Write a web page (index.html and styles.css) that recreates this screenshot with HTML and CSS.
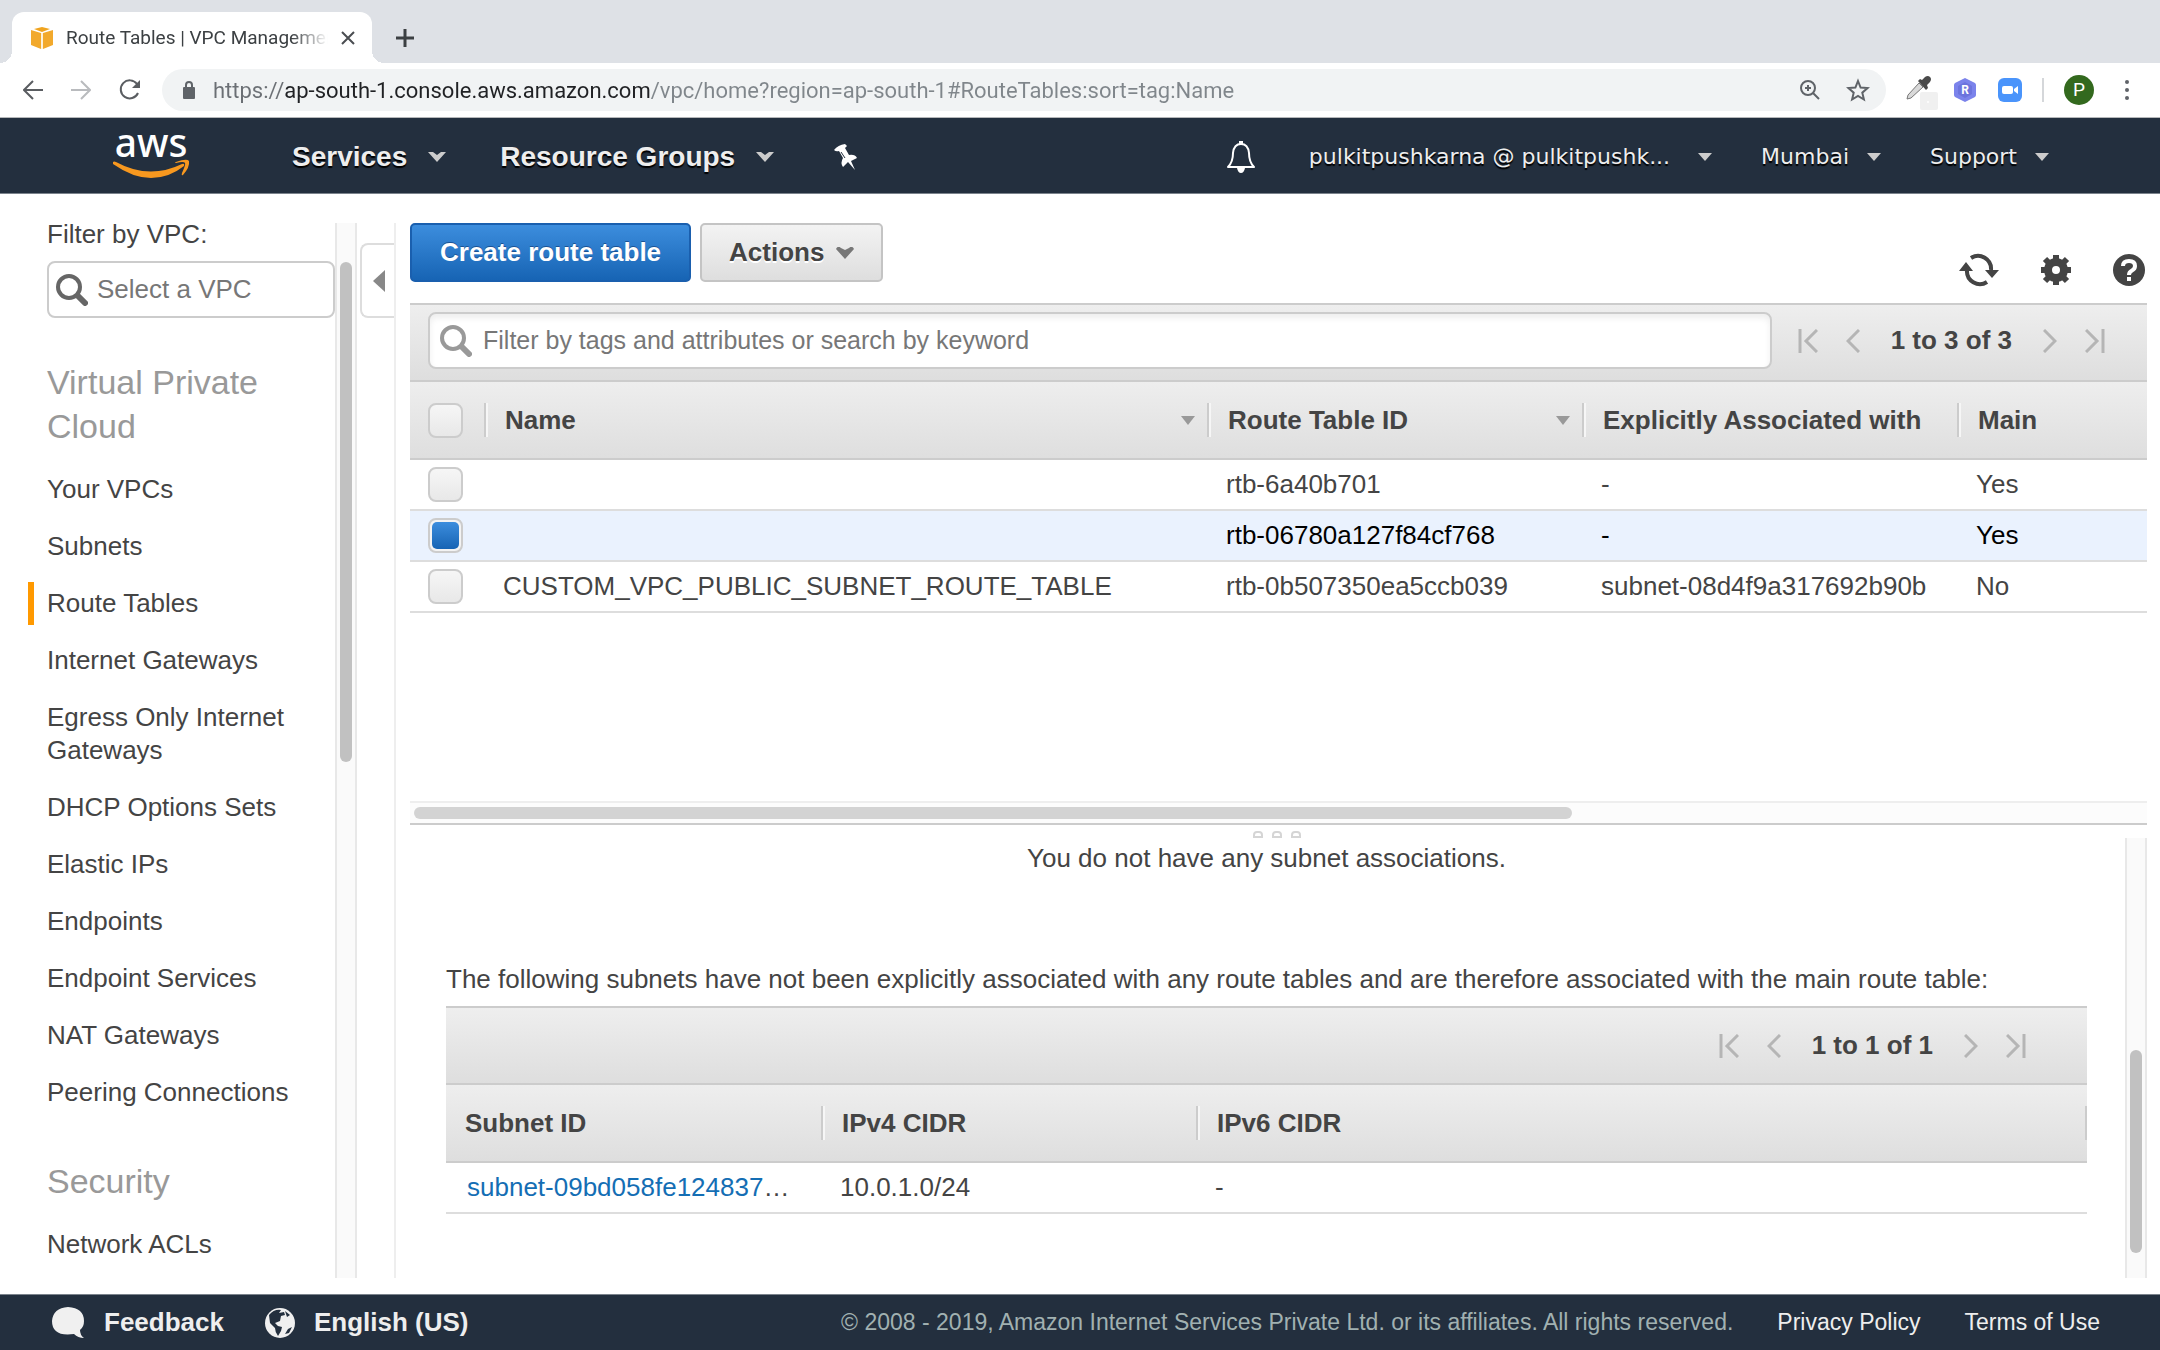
FILE: index.html
```
<!DOCTYPE html>
<html lang="en">
<head>
    <meta charset="UTF-8">
    <meta name="viewport" content="width=device-width, initial-scale=1.0">
    <title>Route Tables | VPC Management Console</title>
    <link rel="stylesheet" href="styles.css">
</head>
<body>
    <!-- Browser tabs -->
    <div class="tab-strip">
        <div class="tab">
            <svg class="tab-icon" viewBox="0 0 22 22" width="22" height="22">
                <path fill="#f2a92c" d="M0 3l10 3v16L0 18z"/>
                <path fill="#f2a92c" d="M22 3l-10 3v16l10-4z"/>
                <path fill="#f0a41f" d="M11 0l8 2-8 3-8-3z"/>
                <path stroke="#fbe3b5" stroke-width="1" d="M11 6v16"/>
            </svg>
            <span class="tab-title">Route Tables | VPC Management</span>
            <button class="plain" aria-label="Close tab">
                <svg viewBox="0 0 14 14" width="14" height="14" fill="none" stroke="#4a4d51" stroke-width="2"><path d="M1 1l12 12M13 1L1 13"/></svg>
            </button>
        </div>
        <button class="plain" aria-label="New tab">
            <svg viewBox="0 0 18 18" width="18" height="18" fill="none" stroke="#3c4043" stroke-width="3"><path d="M9 0v18M0 9h18"/></svg>
        </button>
    </div>

    <!-- Address bar -->
    <div class="toolbar">
        <div class="toolbar-nav">
            <button class="plain" aria-label="Back"><svg viewBox="0 0 20 20" width="20" height="20" fill="none" stroke="#5a5d61" stroke-width="2"><path d="M20 10H1M10 1l-9 9 9 9"/></svg></button>
            <button class="plain" aria-label="Forward"><svg viewBox="0 0 20 20" width="20" height="20" fill="none" stroke="#b9bbbe" stroke-width="2"><path d="M0 10h19M10 1l9 9-9 9"/></svg></button>
            <button class="plain" aria-label="Reload"><svg viewBox="0 0 22 22" width="22" height="22"><path fill="none" stroke="#5a5d61" stroke-width="2" d="M18 5a9 9 0 1 0 1 9"/><path fill="#5a5d61" d="M21 1v8h-8z"/></svg></button>
        </div>
        <div class="address">
            <svg viewBox="0 0 12 18" width="12" height="18"><rect y="6" width="12" height="12" rx="1" fill="#5f6368"/><path fill="none" stroke="#5f6368" stroke-width="2" d="M3 7V4a3 3 0 0 1 6 0v3"/></svg>
            <input class="url" type="text" aria-label="Address" value="https://ap-south-1.console.aws.amazon.com/vpc/home?region=ap-south-1#RouteTables:sort=tag:Name">
            <button class="plain" aria-label="Zoom"><svg viewBox="0 0 20 20" width="20" height="20" fill="none" stroke="#5f6368" stroke-width="2"><circle cx="8" cy="8" r="7"/><path d="M13 13l6 6M8 5v6M5 8h6"/></svg></button>
            <button class="plain" aria-label="Bookmark"><svg viewBox="0 0 24 24" width="24" height="24" fill="none" stroke="#5f6368" stroke-width="2"><path d="M12 3l2.600 6.500 7 .600-5.300 4.600 1.600 6.800L12 17.900l-5.900 3.600 1.600-6.800-5.300-4.600 7-.6z"/></svg></button>
        </div>
        <div class="extensions">
            <button class="plain picker" aria-label="Colour picker">
                <svg viewBox="0 0 32 34" width="32" height="34">
                    <rect x="14" y="16" width="18" height="18" rx="2" fill="#f0f0f0"/>
                    <circle cx="22" cy="26" r="1" fill="#fff"/>
                    <path fill="#d9d9d9" stroke="#777" d="M13 7l4 4L5 22l-4 1 1-4z"/>
                    <path fill="#4a4a4a" d="M12 5l2-2 2 1 3-3q3-2 5 0t0 5l-3 3 1 3-2 2z"/>
                </svg>
            </button>
            <button class="plain" aria-label="R extension">
                <svg viewBox="0 0 22 24" width="22" height="24"><path fill="#7b83eb" d="M11 0l10 5q1 1 1 2v10q0 1-1 2l-10 5-10-5q-1-1-1-2V7q0-1 1-2z"/><path fill="#6c74dd" d="M11 4l7 4v8l-7 4-7-4V8z"/><text x="11" y="16" text-anchor="middle" font-family="Roboto, sans-serif" font-weight="700" font-size="12" fill="#fff">R</text></svg>
            </button>
            <button class="plain" aria-label="Video meeting">
                <svg viewBox="0 0 24 24" width="24" height="24"><rect width="24" height="24" rx="6" fill="#4a94fb"/><rect x="4" y="8" width="11" height="8" rx="2" fill="#fff"/><path fill="#fff" d="M16 11l4-3v8l-4-3z"/></svg>
            </button>
            <span class="divider"></span>
            <button class="avatar">P</button>
            <button class="plain" aria-label="Menu"><svg viewBox="0 0 6 20" width="6" height="20" fill="#5f6368"><circle cx="3" cy="2" r="2"/><circle cx="3" cy="10" r="2"/><circle cx="3" cy="18" r="2"/></svg></button>
        </div>
    </div>

    <!-- AWS navigation -->
    <header class="nav">
        <a class="logo" href="#" aria-label="AWS home">
            <svg viewBox="0 0 78 50" width="78" height="50">
                <text x="39" y="27" text-anchor="middle" font-family="'Noto Sans', sans-serif" font-weight="500" font-size="39" fill="#fff">aws</text>
                <path fill="#f7981f" d="M1 32Q2 31 4 32q33 18 66 2 3-1 2 2-15 12-33 12T1 34z"/>
                <path fill="#f7981f" d="M64 32q11-4 13-1 1 6-6 14-2 1-1-2 4-9 3-10-1-2-9 0-2 0 0-1z"/>
            </svg>
        </a>
        <a class="menu" href="#">Services <svg viewBox="0 0 18 10" width="18" height="10"><path fill="#ccc" d="M0 0h5l4 3 4-3h5L9 10z"/></svg></a>
        <a class="menu" href="#">Resource Groups <svg viewBox="0 0 18 10" width="18" height="10"><path fill="#ccc" d="M0 0h5l4 3 4-3h5L9 10z"/></svg></a>
        <a class="pin" href="#" aria-label="Pin shortcuts">
            <svg viewBox="0 0 24 26" width="24" height="26"><path fill="#fff" d="M0 6Q4 1 11 0l2 2-2 2 4 7q6-1 8 3l-6 3 4 9-7-8-5 5q-3-4 0-9L5 7Q2 8 0 6z"/><path stroke="#232f3e" d="M7 8l4 6"/></svg>
        </a>
        <div class="nav-right">
            <a href="#" class="bell" aria-label="Notifications">
                <svg viewBox="0 0 30 32" width="30" height="32"><path fill="none" stroke="#fff" stroke-width="2" stroke-linejoin="round" d="M15 3q7 0 8 9 0 9 5 14H2q5-5 5-14 1-9 8-9z"/><path fill="#fff" d="M13 0h4v4h-4zM11 27h8q-1 5-4 5t-4-5z"/></svg>
            </a>
            <a href="#" class="menu-small user">pulkitpushkarna @ pulkitpushk... <svg viewBox="0 0 14 8" width="14" height="8"><path fill="#ccc" d="M0 0h14L7 8z"/></svg></a>
            <a href="#" class="menu-small">Mumbai <svg viewBox="0 0 14 8" width="14" height="8"><path fill="#ccc" d="M0 0h14L7 8z"/></svg></a>
            <a href="#" class="menu-small">Support <svg viewBox="0 0 14 8" width="14" height="8"><path fill="#ccc" d="M0 0h14L7 8z"/></svg></a>
        </div>
    </header>

    <div class="console">
        <!-- Sidebar -->
        <aside class="sidebar">
            <nav class="side-nav">
                <label for="vpc">Filter by VPC:</label>
                <div class="field vpc-field">
                    <svg viewBox="0 0 32 32" width="32" height="32" fill="none" stroke="#666"><circle cx="13" cy="13" r="11" stroke-width="4"/><path stroke-width="6" stroke-linecap="round" d="M22 22l7 7"/></svg>
                    <input id="vpc" type="text" placeholder="Select a VPC">
                </div>
                <h2>Virtual Private Cloud</h2>
                <ul>
                    <li><a href="#">Your VPCs</a></li>
                    <li><a href="#">Subnets</a></li>
                    <li class="active"><a href="#">Route Tables</a></li>
                    <li><a href="#">Internet Gateways</a></li>
                    <li><a href="#">Egress Only Internet Gateways</a></li>
                    <li><a href="#">DHCP Options Sets</a></li>
                    <li><a href="#">Elastic IPs</a></li>
                    <li><a href="#">Endpoints</a></li>
                    <li><a href="#">Endpoint Services</a></li>
                    <li><a href="#">NAT Gateways</a></li>
                    <li><a href="#">Peering Connections</a></li>
                </ul>
                <h2>Security</h2>
                <ul>
                    <li><a href="#">Network ACLs</a></li>
                </ul>
            </nav>
            <div class="track track-side"><div class="thumb"></div></div>
            <div class="gutter">
                <button class="collapse" aria-label="Collapse sidebar"><svg viewBox="0 0 12 22" width="12" height="22"><path fill="#888" d="M12 0v22L0 11z"/></svg></button>
            </div>
        </aside>

        <main class="content">
            <div class="actions">
                <button class="btn btn-primary">Create route table</button>
                <button class="btn">Actions <svg viewBox="0 0 18 12" width="18" height="12"><path fill="#777" d="M0 2q2-4 5-1l4 2 4-2q3-3 5 1l-9 10z"/></svg></button>
                <div class="tools">
                    <button class="plain" aria-label="Refresh">
                        <svg viewBox="0 0 40 34" width="40" height="34"><path fill="none" stroke="#444" stroke-width="4" d="M12 5a13 13 0 0 1 20 12M28 29A13 13 0 0 1 8 17"/><path fill="#444" d="M26 17h14l-7 8zM0 18h14L7 9z"/></svg>
                    </button>
                    <button class="plain" aria-label="Settings">
                        <svg viewBox="0 0 30 30" width="30" height="30"><circle cx="15" cy="15" r="8" fill="none" stroke="#444" stroke-width="8"/><path stroke="#444" stroke-width="6" d="M15 0v6M15 24v6M0 15h6M24 15h6M4 4l5 5M21 21l5 5M4 26l5-5M21 9l5-5"/></svg>
                    </button>
                    <button class="plain" aria-label="Help">
                        <svg viewBox="0 0 32 32" width="32" height="32"><circle cx="16" cy="16" r="16" fill="#444"/><path fill="none" stroke="#fff" stroke-width="4" d="M10 12q0-5 6-5t6 5q0 3-3 4.500T16 21"/><path fill="#fff" d="M14 23h4v4h-4z"/></svg>
                    </button>
                </div>
            </div>

            <div class="bar">
                <div class="field filter-field">
                    <svg viewBox="0 0 32 32" width="32" height="32" fill="none" stroke="#999"><circle cx="13" cy="13" r="11" stroke-width="4"/><path stroke-width="6" stroke-linecap="round" d="M22 22l7 7"/></svg>
                    <input type="text" aria-label="Filter route tables" placeholder="Filter by tags and attributes or search by keyword">
                </div>
                <div class="pager">
                    <button class="plain" aria-label="First page"><svg viewBox="0 0 20 24" width="20" height="24" fill="none" stroke="#b5b5b5" stroke-width="3"><path d="M2 0v24M19 1L8 12l11 11"/></svg></button>
                    <button class="plain" aria-label="Previous page"><svg viewBox="0 0 14 24" width="14" height="24" fill="none" stroke="#b5b5b5" stroke-width="3"><path d="M13 1L2 12l11 11"/></svg></button>
                    <span>1 to 3 of 3</span>
                    <button class="plain" aria-label="Next page"><svg viewBox="0 0 14 24" width="14" height="24" fill="none" stroke="#b5b5b5" stroke-width="3"><path d="M1 1l11 11L1 23"/></svg></button>
                    <button class="plain" aria-label="Last page"><svg viewBox="0 0 20 24" width="20" height="24" fill="none" stroke="#b5b5b5" stroke-width="3"><path d="M18 0v24M1 1l11 11L1 23"/></svg></button>
                </div>
            </div>

            <div class="upper">
                <table class="grid">
                    <colgroup><col class="col-check"><col><col class="col-id"><col class="col-id"><col class="col-main"></colgroup>
                    <thead>
                        <tr>
                            <th><input type="checkbox" aria-label="Select all"></th>
                            <th><div class="head">Name <svg viewBox="0 0 14 9" width="14" height="9"><path fill="#999" d="M0 0h14L7 9z"/></svg></div></th>
                            <th><div class="head">Route Table ID <svg viewBox="0 0 14 9" width="14" height="9"><path fill="#999" d="M0 0h14L7 9z"/></svg></div></th>
                            <th><div class="head">Explicitly Associated with</div></th>
                            <th><div class="head">Main</div></th>
                        </tr>
                    </thead>
                    <tbody>
                        <tr>
                            <td><input type="checkbox" aria-label="Select rtb-6a40b701"></td>
                            <td></td>
                            <td>rtb-6a40b701</td>
                            <td>-</td>
                            <td>Yes</td>
                        </tr>
                        <tr class="selected">
                            <td><input type="checkbox" aria-label="Select rtb-06780a127f84cf768" checked></td>
                            <td></td>
                            <td>rtb-06780a127f84cf768</td>
                            <td>-</td>
                            <td>Yes</td>
                        </tr>
                        <tr>
                            <td><input type="checkbox" aria-label="Select rtb-0b507350ea5ccb039"></td>
                            <td>CUSTOM_VPC_PUBLIC_SUBNET_ROUTE_TABLE</td>
                            <td>rtb-0b507350ea5ccb039</td>
                            <td>subnet-08d4f9a317692b90b</td>
                            <td>No</td>
                        </tr>
                    </tbody>
                </table>
                <div class="track-wide"><div class="thumb"></div></div>
            </div>

            <div class="splitter"><i></i><i></i><i></i></div>

            <div class="lower">
                <section class="details">
                    <p class="empty">You do not have any subnet associations.</p>
                    <p class="note">The following subnets have not been explicitly associated with any route tables and are therefore associated with the main route table:</p>
                    <div class="bar bar-inner">
                        <div class="pager">
                            <button class="plain" aria-label="First page"><svg viewBox="0 0 20 24" width="20" height="24" fill="none" stroke="#b5b5b5" stroke-width="3"><path d="M2 0v24M19 1L8 12l11 11"/></svg></button>
                            <button class="plain" aria-label="Previous page"><svg viewBox="0 0 14 24" width="14" height="24" fill="none" stroke="#b5b5b5" stroke-width="3"><path d="M13 1L2 12l11 11"/></svg></button>
                            <span>1 to 1 of 1</span>
                            <button class="plain" aria-label="Next page"><svg viewBox="0 0 14 24" width="14" height="24" fill="none" stroke="#b5b5b5" stroke-width="3"><path d="M1 1l11 11L1 23"/></svg></button>
                            <button class="plain" aria-label="Last page"><svg viewBox="0 0 20 24" width="20" height="24" fill="none" stroke="#b5b5b5" stroke-width="3"><path d="M18 0v24M1 1l11 11L1 23"/></svg></button>
                        </div>
                    </div>
                    <table class="grid grid-inner">
                        <colgroup><col class="col-id"><col class="col-id"><col></colgroup>
                        <thead>
                            <tr>
                                <th><div class="head">Subnet ID</div></th>
                                <th><div class="head">IPv4 CIDR</div></th>
                                <th><div class="head">IPv6 CIDR</div></th>
                            </tr>
                        </thead>
                        <tbody>
                            <tr>
                                <td><a href="#">subnet-09bd058fe124837</a>…</td>
                                <td>10.0.1.0/24</td>
                                <td>-</td>
                            </tr>
                        </tbody>
                    </table>
                </section>
                <div class="track track-details"><div class="thumb"></div></div>
            </div>
        </main>
    </div>

    <footer class="footer">
        <a href="#" class="footer-link">
            <svg viewBox="0 0 34 32" width="34" height="32"><path fill="#f0f0f0" d="M16 0q16 1 16 14 0 6-4 9 0 5 4 8-6 0-10-4-22 3-22-13Q1 1 16 0z"/></svg>
            Feedback
        </a>
        <a href="#" class="footer-link">
            <svg viewBox="0 0 32 32" width="32" height="32"><circle cx="16" cy="16" r="15" fill="#f0f0f0"/><path fill="#232f3e" d="M5 8q5-6 12-5l-2 3 5-1 1 3-4 1-1 5-5 2 3 3 4 1-1 4-3 5q-3-4-3-8l-5-5zM21 4l5 4-3 2zM24 22l4-2-3 6-4 1z"/></svg>
            English (US)
        </a>
        <span class="copyright">© 2008 - 2019, Amazon Internet Services Private Ltd. or its affiliates. All rights reserved.</span>
        <a href="#" class="legal">Privacy Policy</a>
        <a href="#" class="legal">Terms of Use</a>
    </footer>
</body>
</html>
```
FILE: styles.css
```
* {
    box-sizing: border-box;
}

body {
    margin: 0;
    min-height: 100vh;
    display: flex;
    flex-direction: column;
    background-color: #fff;
    color: #444;
    font-family: "Liberation Sans", Arial, sans-serif;
    font-size: 26px;
    line-height: 33px;
}

a {
    color: inherit;
    text-decoration: none;
}

input,
button {
    font: inherit;
    color: inherit;
}

svg {
    display: block;
    flex: none;
}

.plain {
    padding: 0;
    border: 0;
    background: none;
    cursor: pointer;
}

/* Browser */
.tab-strip {
    display: flex;
    align-items: center;
    gap: 24px;
    height: 63px;
    padding: 12px 12px 0;
    background-color: #dee1e6;
}

.tab {
    position: relative;
    display: flex;
    align-items: center;
    gap: 13px;
    width: 360px;
    height: 51px;
    padding: 0 17px 0 19px;
    border-radius: 12px 12px 0 0;
    background-color: #fff;
}

.tab::before,
.tab::after {
    content: "";
    position: absolute;
    bottom: 0;
    width: 12px;
    height: 12px;
}

.tab::before {
    right: 100%;
    background: radial-gradient(circle at 0 0, transparent 12px, #fff 12px);
}

.tab::after {
    left: 100%;
    background: radial-gradient(circle at 100% 0, transparent 12px, #fff 12px);
}

.tab-title {
    flex: 1;
    overflow: hidden;
    white-space: nowrap;
    color: #3c4043;
    font-family: Roboto, sans-serif;
    font-size: 19px;
    -webkit-mask-image: linear-gradient(to right, #000 86%, transparent);
    mask-image: linear-gradient(to right, #000 86%, transparent);
}

.toolbar {
    display: flex;
    align-items: center;
    height: 55px;
    padding: 0 30px 0 23px;
    border-bottom: 1px solid #b6b8ba;
}

.toolbar-nav {
    display: flex;
    gap: 28px;
    padding-right: 21px;
}

.address {
    flex: 1;
    display: flex;
    align-items: center;
    gap: 26px;
    height: 42px;
    padding: 0 16px 0 21px;
    border-radius: 21px;
    background-color: #f1f3f4;
}

.url {
    flex: 1;
    min-width: 0;
    margin-left: -8px;
    padding: 0;
    border: 0;
    outline: 0;
    font-family: Roboto, sans-serif;
    font-size: 22px;
    background: linear-gradient(to right, #6b6f74 72px, #202124 72px, #202124 438px, #80868b 438px);
    -webkit-background-clip: text;
    background-clip: text;
    color: transparent;
}

.extensions {
    display: flex;
    align-items: center;
    gap: 22px;
    padding-left: 20px;
}

.picker {
    padding-top: 6px;
    margin-right: -6px;
}

.divider {
    width: 2px;
    height: 24px;
    margin: 0 -2px;
    background-color: #d5d7da;
}

.avatar {
    width: 30px;
    height: 30px;
    margin-right: 8px;
    padding: 0;
    border: 0;
    border-radius: 50%;
    background-color: #33691e;
    color: #fff;
    font-family: Roboto, sans-serif;
    font-size: 19px;
    line-height: 30px;
}

/* AWS navigation */
.nav {
    display: flex;
    align-items: center;
    height: 76px;
    padding: 2px 111px 0 112px;
    border-bottom: 1px solid #7b838c;
    background-color: #232f3e;
    color: #eee;
    text-shadow: 0 2px 1px #000;
}

.logo {
    margin: 0 102px 4px 0;
    text-shadow: none;
}

.menu {
    display: flex;
    align-items: center;
    gap: 21px;
    margin-right: 54px;
    font-size: 28px;
    font-weight: bold;
}

.pin {
    margin-left: 6px;
}

.nav-right {
    display: flex;
    align-items: center;
    gap: 49px;
    margin-left: auto;
}

.menu-small {
    display: flex;
    align-items: center;
    gap: 18px;
    font-family: "DejaVu Sans", Verdana, sans-serif;
    font-size: 22px;
}

.user {
    gap: 28px;
}

.bell {
    margin-right: 4px;
}

/* Sidebar */
.console {
    flex: 1;
    display: flex;
    padding: 29px 13px 16px 0;
}

.sidebar {
    flex: none;
    display: flex;
    width: 396px;
    margin-right: 14px;
    border-right: 2px solid #eee;
}

.side-nav {
    flex: 1;
    min-width: 0;
    padding-left: 47px;
}

.side-nav label {
    display: block;
    line-height: 22px;
}

.field {
    display: flex;
    align-items: center;
    border: 2px solid #ccc;
    border-radius: 8px;
    background-color: #fff;
}

.field input {
    flex: 1;
    min-width: 0;
    padding: 0;
    border: 0;
    outline: 0;
    background: none;
}

.field input::placeholder {
    color: #777;
    opacity: 1;
}

.vpc-field {
    gap: 9px;
    height: 57px;
    margin-top: 16px;
    padding-left: 7px;
}

.side-nav h2 {
    margin: 42px 40px 0 0;
    color: #999;
    font-size: 34px;
    font-weight: normal;
    line-height: 44px;
}

.side-nav ul {
    margin: 25px 0 0;
    padding: 0 0 8px;
    list-style: none;
}

.side-nav li {
    margin-bottom: 24px;
}

.side-nav li:last-child {
    margin-bottom: 0;
}

.side-nav .active {
    margin: -5px 0 19px -19px;
    padding: 5px 0 5px 13px;
    border-left: 6px solid #ff9900;
}

.track {
    flex: none;
    width: 22px;
    border: solid #e8e8e8;
    border-width: 0 2px;
    background-color: #fafafa;
}

.track .thumb {
    width: 12px;
    margin: 0 auto;
    border-radius: 6px;
    background-color: #c1c1c1;
}

.track-side {
    padding-top: 39px;
}

.track-side .thumb {
    height: 500px;
}

.gutter {
    width: 37px;
    padding-left: 3px;
}

.collapse {
    display: flex;
    align-items: center;
    width: 100%;
    height: 75px;
    margin-top: 20px;
    padding: 0 0 0 11px;
    border: 2px solid #ddd;
    border-right: 0;
    border-radius: 8px 0 0 8px;
    background-color: #fff;
}

/* Main area */
.content {
    flex: 1;
    min-width: 0;
    display: flex;
    flex-direction: column;
}

.actions {
    display: flex;
    align-items: flex-start;
    gap: 9px;
    height: 80px;
}

.btn {
    display: flex;
    align-items: center;
    gap: 12px;
    height: 59px;
    padding: 0 27px;
    border: 2px solid #c4c4c4;
    border-radius: 5px;
    background: linear-gradient(#f3f3f3, #dedede);
    font-weight: bold;
    text-shadow: 0 2px 0 #fff;
}

.btn-primary {
    padding: 0 28px;
    border-color: #1a5fae;
    background: linear-gradient(#3c8ddd, #1764b4);
    color: #fff;
    text-shadow: 0 -1px 0 #1a5294;
}

.tools {
    display: flex;
    align-items: center;
    gap: 42px;
    margin: 30px 2px 0 auto;
}

.bar {
    display: flex;
    align-items: center;
    gap: 26px;
    height: 77px;
    padding: 0 42px 4px 18px;
    border-top: 2px solid #ccc;
    background: linear-gradient(#eee, #dedede);
}

.filter-field {
    flex: 1;
    gap: 11px;
    height: 57px;
    padding-left: 10px;
    box-shadow: inset 0 4px 6px #eee;
    font-size: 25px;
}

.bar-inner {
    padding: 0 61px 0 0;
    justify-content: flex-end;
}

.pager {
    display: flex;
    align-items: center;
    gap: 28px;
    font-weight: bold;
}

.pager span {
    padding: 0 3px;
}

.upper {
    display: flex;
    flex-direction: column;
    height: 445px;
    border-bottom: 2px solid #ccc;
}

.grid {
    width: 100%;
    table-layout: fixed;
    border-collapse: collapse;
}

.col-check {
    width: 74px;
}

.col-id {
    width: 375px;
}

.col-main {
    width: 190px;
}

.grid thead {
    background: linear-gradient(#eee, #dedede);
}

.grid th {
    height: 78px;
    padding: 0;
    border: solid #ccc;
    border-width: 2px 0;
    text-align: left;
    white-space: nowrap;
}

.head {
    display: flex;
    align-items: center;
    justify-content: space-between;
    height: 34px;
    padding: 0 12px 0 19px;
    border-left: 2px solid #ccc;
    box-shadow: inset 2px 0 0 #f6f6f6;
}

.grid td {
    height: 51px;
    padding: 0 0 0 19px;
    border-bottom: 2px solid #ddd;
    white-space: nowrap;
}

.grid th:first-child input,
.grid td:first-child input {
    display: block;
}

.grid td:has(input),
.grid th:has(input) {
    padding-left: 18px;
}

.grid .selected {
    background-color: #eaf2fe;
    color: #000;
}

.grid input {
    appearance: none;
    width: 35px;
    height: 35px;
    margin: 0;
    border: 2px solid #ccc;
    border-radius: 8px;
    background: linear-gradient(#f6f6f6, #e8e8e8);
}

.grid input:checked {
    position: relative;
    background: #f3f3f3;
}

.grid input:checked::after {
    content: "";
    position: absolute;
    inset: 2px;
    border-radius: 5px;
    background: linear-gradient(#3c8ddd, #1764b4);
}

.track-wide {
    height: 22px;
    margin-top: auto;
    padding: 4px;
    border-top: 2px solid #eee;
    background-color: #fcfcfc;
}

.track-wide .thumb {
    width: 67%;
    height: 12px;
    border-radius: 6px;
    background-color: #d3d3d3;
}

.splitter {
    display: flex;
    justify-content: center;
    gap: 9px;
    height: 13px;
    padding: 6px 4px 0 0;
}

.splitter i {
    width: 10px;
    height: 7px;
    border: 2px solid #d5d5d5;
    border-radius: 4px 4px 0 0;
}

.lower {
    flex: 1;
    display: flex;
    gap: 38px;
}

.details {
    flex: 1;
    padding-left: 36px;
}

.details p {
    margin: 0;
}

.empty {
    padding-top: 4px;
    text-align: center;
}

.note {
    padding: 88px 0 10px;
    white-space: nowrap;
}

.grid-inner .head {
    padding-left: 19px;
}

.grid-inner th:first-child .head {
    border-left: 0;
    box-shadow: none;
}

.grid-inner th:last-child .head {
    border-right: 2px solid #ccc;
}

.grid-inner td:first-child {
    padding-left: 21px;
}

.grid-inner a {
    color: #146eb4;
}

.track-details {
    display: flex;
    flex-direction: column;
    justify-content: flex-end;
    padding-bottom: 25px;
}

.track-details .thumb {
    height: 203px;
}

/* Footer */
.footer {
    display: flex;
    align-items: center;
    height: 56px;
    padding: 0 60px 0 52px;
    border-top: 1px solid #7b838c;
    background-color: #232f3e;
    color: #eee;
}

.footer-link {
    display: flex;
    align-items: center;
    gap: 18px;
    margin-right: 40px;
    font-weight: bold;
}

.copyright {
    margin-left: auto;
    color: #a1b1b1;
    font-size: 23px;
}

.legal {
    margin-left: 44px;
    font-size: 23px;
}
```
